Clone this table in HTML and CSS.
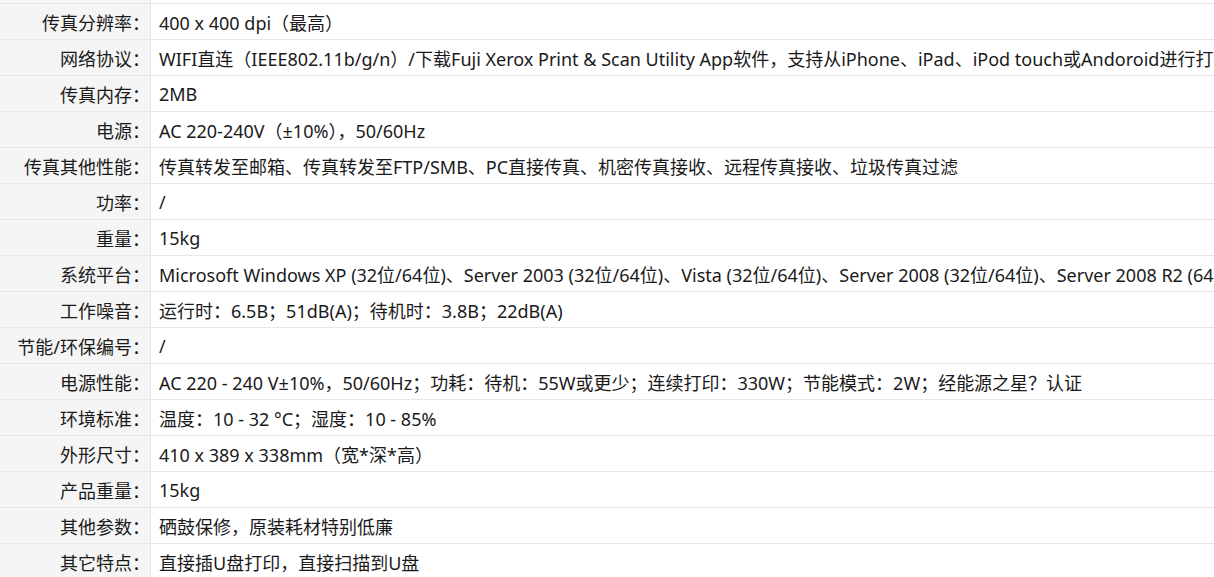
FILE: index.html
```html
<!DOCTYPE html>
<html lang="zh-CN">
<head>
    <title>产品参数</title>
    <link rel="stylesheet" href="styles.css">
</head>
<body>
    <table class="params">
        <tr><th>传真速度：</th><td>约3秒/页</td></tr>
        <tr><th>传真分辨率：</th><td>400 x 400 dpi（最高）</td></tr>
        <tr><th>网络协议：</th><td>WIFI直连（IEEE802.11b/g/n）/下载Fuji Xerox Print &amp; Scan Utility App软件，支持从iPhone、iPad、iPod touch或Andoroid进行打印和扫描</td></tr>
        <tr><th>传真内存：</th><td>2MB</td></tr>
        <tr><th>电源：</th><td>AC 220-240V（±10%），50/60Hz</td></tr>
        <tr><th>传真其他性能：</th><td>传真转发至邮箱、传真转发至FTP/SMB、PC直接传真、机密传真接收、远程传真接收、垃圾传真过滤</td></tr>
        <tr><th>功率：</th><td>/</td></tr>
        <tr><th>重量：</th><td>15kg</td></tr>
        <tr><th>系统平台：</th><td>Microsoft Windows XP (32位/64位)、Server 2003 (32位/64位)、Vista (32位/64位)、Server 2008 (32位/64位)、Server 2008 R2 (64位)、Windows 7 (32位/64位)</td></tr>
        <tr><th>工作噪音：</th><td>运行时：6.5B；51dB(A)；待机时：3.8B；22dB(A)</td></tr>
        <tr><th>节能/环保编号：</th><td>/</td></tr>
        <tr><th>电源性能：</th><td>AC 220 - 240 V±10%，50/60Hz；功耗：待机：55W或更少；连续打印：330W；节能模式：2W；经能源之星？认证</td></tr>
        <tr><th>环境标准：</th><td>温度：10 - 32 °C；湿度：10 - 85%</td></tr>
        <tr><th>外形尺寸：</th><td>410 x 389 x 338mm（宽*深*高）</td></tr>
        <tr><th>产品重量：</th><td>15kg</td></tr>
        <tr><th>其他参数：</th><td>硒鼓保修，原装耗材特别低廉</td></tr>
        <tr><th>其它特点：</th><td>直接插U盘打印，直接扫描到U盘</td></tr>
    </table>
</body>
</html>
```

FILE: styles.css
```css
html, body {
    overflow: hidden;
}
body {
    margin: 0;
    font-family: "Noto Sans", "Noto Sans CJK SC", sans-serif;
    font-size: 18px;
    color: #1a1a1a;
    background: #fff;
}
.params {
    width: max-content;
    border-collapse: collapse;
    margin-top: -33px;
    white-space: nowrap;
}
.params tr {
    border-top: 1px solid #e6e6e6;
    border-bottom: 1px solid #e6e6e6;
}
.params th {
    width: 150px;
    height: 35px;
    padding: 0;
    background: #f5f5f5;
    border-right: 1px solid #e6e6e6;
    text-align: right;
    font-weight: normal;
}
.params td {
    height: 35px;
    padding: 0 0 0 8px;
    text-align: left;
}
```
